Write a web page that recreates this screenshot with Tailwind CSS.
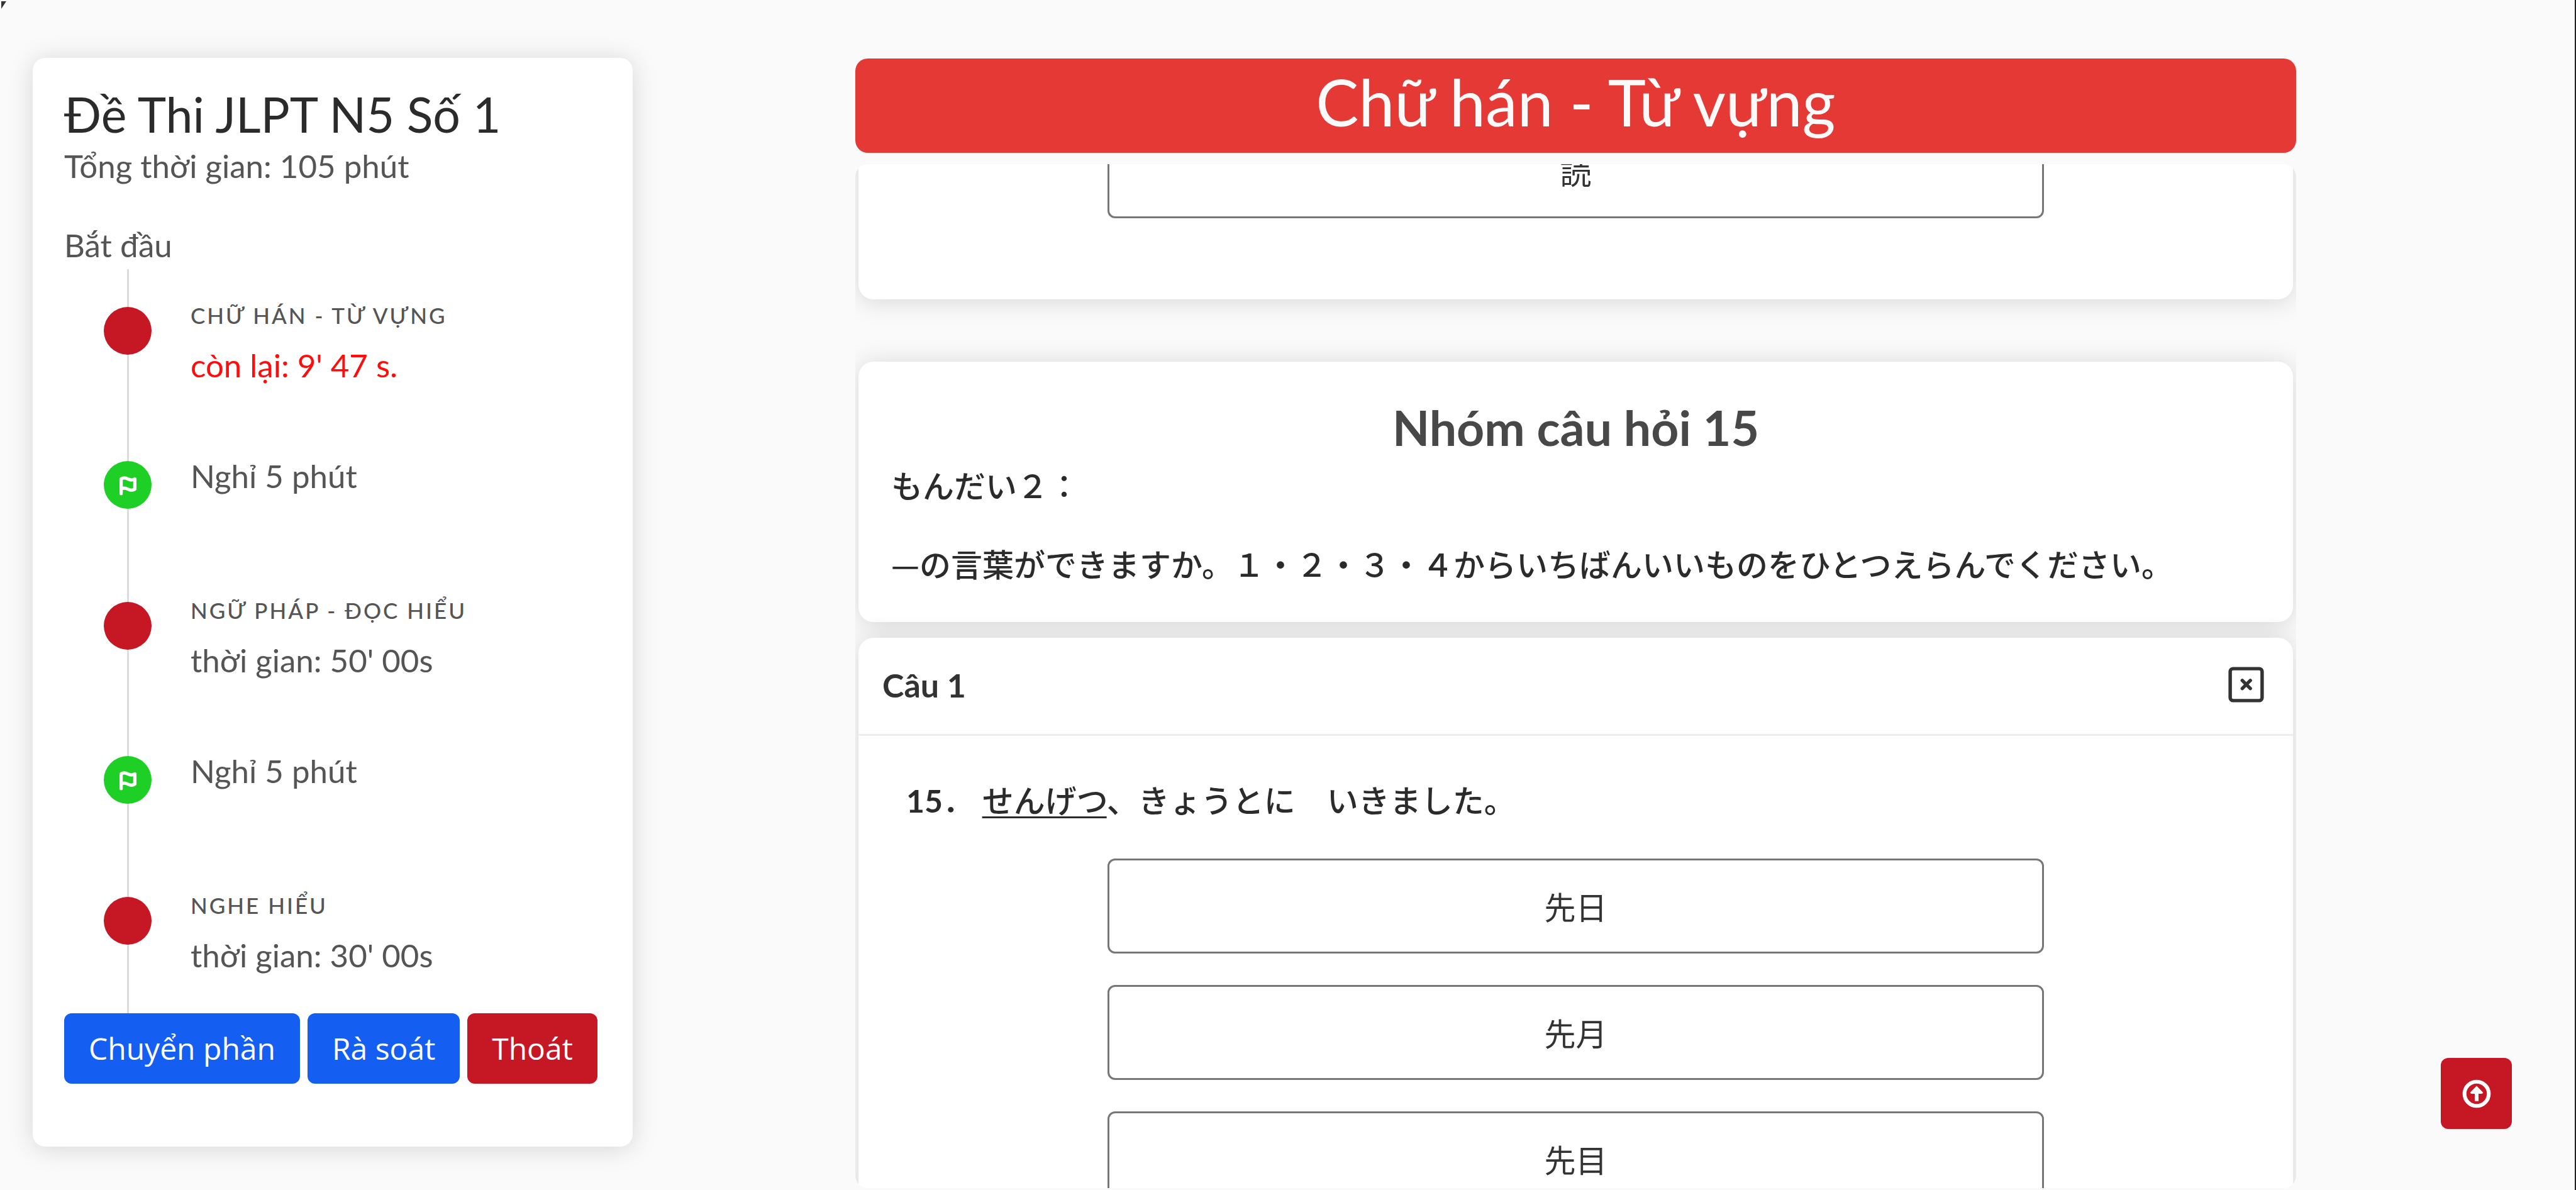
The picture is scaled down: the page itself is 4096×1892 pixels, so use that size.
<!DOCTYPE html>
<html lang="vi">
<head>
<meta charset="utf-8">
<title>Đề Thi JLPT N5 Số 1</title>
<script src="https://cdn.jsdelivr.net/npm/@tailwindcss/browser@4"></script>
</head>
<body class="relative flex h-screen items-start overflow-hidden bg-[#fafafa] border-r-2 border-[#222] pl-[52px] pb-[3px] font-['Lato','Noto_Sans_CJK_JP',sans-serif] text-[51px] leading-[76px] text-[#555]">

<aside class="mt-[92px] w-[954px] shrink-0 rounded-[20px] bg-white px-[50px] pt-[44px] pb-[100px] shadow-[0_3px_40px_rgba(0,0,0,0.15)]">
  <h1 class="text-[77px] leading-[90px] text-[#2b2b2b]">Đề Thi JLPT N5 Số 1</h1>
  <p>Tổng thời gian: 105 phút</p>
  <p class="mt-[50px]">Bắt đầu</p>

  <ol class="relative pt-[48px] pb-[54px]">
    <li class="absolute top-0 bottom-0 left-[100px] w-[3px] bg-[#dcdcdc]" aria-hidden="true"></li>
    <li class="relative flex gap-[62px] pl-[63px] pb-[100px]">
      <span class="mt-[12px] size-[76px] shrink-0 rounded-full bg-[#c51724]"></span>
      <div>
        <h2 class="text-[35px] leading-[50px] font-medium tracking-[3px] uppercase">Chữ hán - Từ vựng</h2>
        <p class="mt-[17px] text-[#ff0d0d]">còn lại: 9' 47 s.</p>
      </div>
    </li>
    <li class="relative flex gap-[62px] pl-[63px] pb-[150px]">
      <span class="mt-[14px] -mb-[14px] flex size-[76px] shrink-0 items-center justify-center rounded-full bg-[#1ecf26]">
        <svg class="h-[33px] w-[29px]" viewBox="150 150 112 126" fill="none" stroke="#fff" stroke-width="20" stroke-linecap="round" stroke-linejoin="round" aria-hidden="true"><path d="M164 264V174Q182 162 206 175Q228 186 248 174V237Q228 249 206 237Q184 226 164 235"/></svg>
      </span>
      <p>Nghỉ 5 phút</p>
    </li>
    <li class="relative flex gap-[62px] pl-[63px] pb-[100px]">
      <span class="mt-[12px] size-[76px] shrink-0 rounded-full bg-[#c51724]"></span>
      <div>
        <h2 class="text-[35px] leading-[50px] font-medium tracking-[3px] uppercase">Ngữ pháp - Đọc hiểu</h2>
        <p class="mt-[17px]">thời gian: 50' 00s</p>
      </div>
    </li>
    <li class="relative flex gap-[62px] pl-[63px] pb-[150px]">
      <span class="mt-[14px] -mb-[14px] flex size-[76px] shrink-0 items-center justify-center rounded-full bg-[#1ecf26]">
        <svg class="h-[33px] w-[29px]" viewBox="150 150 112 126" fill="none" stroke="#fff" stroke-width="20" stroke-linecap="round" stroke-linejoin="round" aria-hidden="true"><path d="M164 264V174Q182 162 206 175Q228 186 248 174V237Q228 249 206 237Q184 226 164 235"/></svg>
      </span>
      <p>Nghỉ 5 phút</p>
    </li>
    <li class="relative flex gap-[62px] pl-[63px]">
      <span class="mt-[12px] size-[76px] shrink-0 rounded-full bg-[#c51724]"></span>
      <div>
        <h2 class="text-[35px] leading-[50px] font-medium tracking-[3px] uppercase">Nghe hiểu</h2>
        <p class="mt-[17px]">thời gian: 30' 00s</p>
      </div>
    </li>
  </ol>

  <div class="flex gap-[12px] font-['Open_Sans',sans-serif] text-[48px] text-white">
    <button class="h-[112px] rounded-[12px] bg-[#145ff2] px-[39px] whitespace-nowrap">Chuyển phần</button>
    <button class="h-[112px] rounded-[12px] bg-[#145ff2] px-[39px] whitespace-nowrap">Rà soát</button>
    <button class="h-[112px] rounded-[12px] bg-[#c51724] px-[39px] whitespace-nowrap">Thoát</button>
  </div>
</aside>

<main class="mr-[443px] ml-[354px] flex h-full min-w-0 flex-1 flex-col pt-[93px]">
  <header class="flex h-[150px] shrink-0 items-center justify-center rounded-[20px] bg-[#e53935]">
    <h2 class="pb-[12px] text-[102px] leading-[120px] text-[#fafafa]">Chữ hán - Từ vựng</h2>
  </header>

  <div class="mt-[18px] min-h-0 flex-1 overflow-hidden rounded-[20px] px-[5px]">
    <section class="-mt-[165px] flex flex-col items-center rounded-[24px] bg-white pt-[100px] pb-[129px] text-[50px] leading-[75px] shadow-[0_3px_40px_rgba(0,0,0,0.15)]">
      <button class="w-[65.3%] rounded-[12px] border-3 border-[#777] py-[35px] font-['Noto_Sans_CJK_JP',sans-serif] text-[#333]">読</button>
    </section>

    <section class="mt-[99px] rounded-[24px] bg-white px-[52px] pt-[59px] pb-[56px] font-medium shadow-[0_3px_40px_rgba(0,0,0,0.15)]">
      <h3 class="mb-[9px] text-center text-[77px] leading-[90px] font-bold text-[#484848]">Nhóm câu hỏi 15</h3>
      <div class="font-['Noto_Sans_CJK_JP',sans-serif] text-[50px] leading-[75px] text-[#2b2b2b]">
        <p class="mb-[50px]">もんだい２：</p>
        <p>—の言葉ができますか。１・２・３・４からいちばんいいものをひとつえらんでください。</p>
      </div>
    </section>

    <section class="mt-[25px] rounded-[24px] bg-white pb-[129px] shadow-[0_3px_40px_rgba(0,0,0,0.15)]">
      <div class="flex h-[156px] items-center justify-between border-b-3 border-[#ededed] pr-[46px] pb-[4px] pl-[38px]">
        <h4 class="text-[52px] font-bold text-[#333]">Câu 1</h4>
        <button aria-label="Đóng">
          <svg class="size-[57px]" viewBox="118 101 219 219" fill="none" stroke="#333" stroke-width="21" stroke-linecap="round" stroke-linejoin="round" aria-hidden="true"><rect x="130" y="113" width="195" height="195" rx="18"/><path d="M204 185L253 234M253 185L204 234"/></svg>
        </button>
      </div>
      <p class="mt-[66px] pl-[76px] text-[50px] leading-[75px] font-medium text-[#2b2b2b]"><b>15</b>．&nbsp;<span class="underline decoration-[3px] underline-offset-[6px] [text-decoration-skip-ink:none]">せんげつ</span>、きょうとに　いきました。</p>
      <div class="mt-[54px] flex flex-col items-center gap-[50px] text-[50px] leading-[75px]">
        <button class="w-[65.3%] rounded-[12px] border-3 border-[#777] py-[35px] font-['Noto_Sans_CJK_JP',sans-serif] text-[#333]">先日</button>
        <button class="w-[65.3%] rounded-[12px] border-3 border-[#777] py-[35px] font-['Noto_Sans_CJK_JP',sans-serif] text-[#333]">先月</button>
        <button class="w-[65.3%] rounded-[12px] border-3 border-[#777] py-[35px] font-['Noto_Sans_CJK_JP',sans-serif] text-[#333]">先目</button>
      </div>
    </section>
  </div>
</main>

<svg class="absolute top-[2px] left-[2px] h-[12px] w-[8px]" viewBox="0 0 8 12" aria-hidden="true"><path d="M0 0H8L0 12Z" fill="#333"/></svg>

<button class="absolute right-[100px] bottom-[97px] flex size-[113px] items-center justify-center rounded-[12px] bg-[#c51724]" aria-label="Lên đầu trang">
  <svg class="size-[46px]" viewBox="581 417 174 174" fill="none" stroke="#fff" stroke-width="23" aria-hidden="true"><circle cx="668" cy="504" r="73"/><path d="M668 548V490"/><path d="M668 457L707 496Q704 504 696 504H640Q632 504 629 496Z" fill="#fff" stroke="none"/></svg>
</button>
</body>
</html>
